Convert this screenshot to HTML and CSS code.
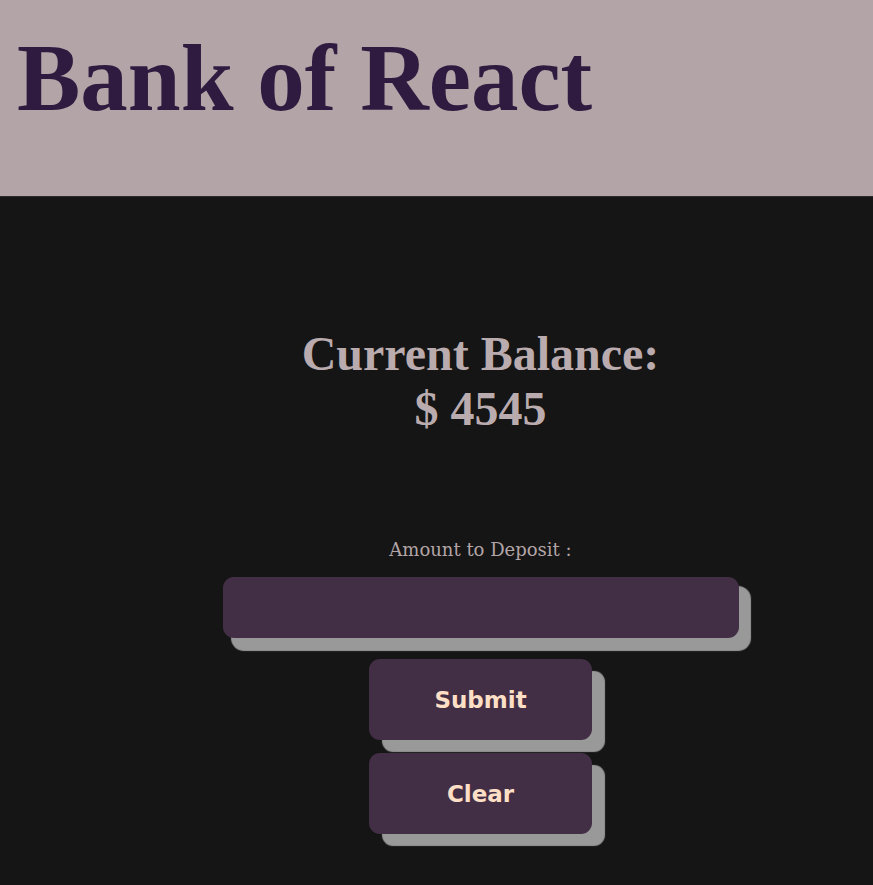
FILE: index.html
```html
<!DOCTYPE html>
<html lang="en">
<head>
<meta charset="utf-8">
<title>Bank of React</title>
<link rel="stylesheet" href="styles.css">
</head>
<body>
<header class="header">
  <h1 class="title">Bank of React</h1>
</header>
<main class="main">
  <h2 class="balance">Current Balance:<br>$ 4545</h2>
  <form class="deposit-form" onsubmit="return false;">
    <label class="label" for="amount">Amount to Deposit :</label>
    <input class="amount-input" id="amount" type="text">
    <button class="btn" type="submit">Submit</button>
    <button class="btn" type="button">Clear</button>
  </form>
</main>
</body>
</html>
```

FILE: styles.css
```css
html, body {
  margin: 0;
  padding: 0;
  background: #151515;
  min-height: 100%;
}

body {
  font-family: "Liberation Serif", "Times New Roman", serif;
}

.header {
  background: #b3a5a7;
  height: 197px;
  box-sizing: border-box;
  padding: 23px 0 0 17px;
  border-bottom: 1px solid #2a2a2a;
}

.title {
  margin: 0;
  font-family: "Liberation Serif", "Times New Roman", serif;
  font-weight: bold;
  font-size: 95px;
  line-height: normal;
  color: #2f1a40;
}

.main {
  padding-left: 88px;
  padding-bottom: 40px;
  display: flex;
  flex-direction: column;
  align-items: center;
}

.balance {
  margin: 129px 0 0 0;
  font-family: "Liberation Serif", "Times New Roman", serif;
  font-weight: bold;
  font-size: 48px;
  line-height: normal;
  color: #b9abae;
  text-align: center;
}

.deposit-form {
  display: flex;
  flex-direction: column;
  align-items: center;
  margin-top: 103px;
}

.label {
  font-family: "DejaVu Serif", serif;
  font-size: 18px;
  color: #b3a5a7;
  line-height: 21px;
}

.amount-input {
  margin-top: 17px;
  width: 516px;
  height: 61px;
  box-sizing: border-box;
  border: none;
  border-radius: 11px;
  background: #432f45;
  box-shadow: 10px 11px 1px 2px #999999;
  outline: none;
  color: #fcdcc4;
  font-size: 20px;
  padding: 0 12px;
}

.btn {
  width: 223px;
  height: 81px;
  border: none;
  border-radius: 11px;
  background: #432f45;
  box-shadow: 13px 12px 1px #999999;
  color: #fddfc6;
  font-family: "DejaVu Sans", Verdana, sans-serif;
  font-weight: bold;
  font-size: 23px;
  cursor: pointer;
  padding: 0;
}

.amount-input + .btn {
  margin-top: 21px;
}

.btn + .btn {
  margin-top: 13px;
}
```
